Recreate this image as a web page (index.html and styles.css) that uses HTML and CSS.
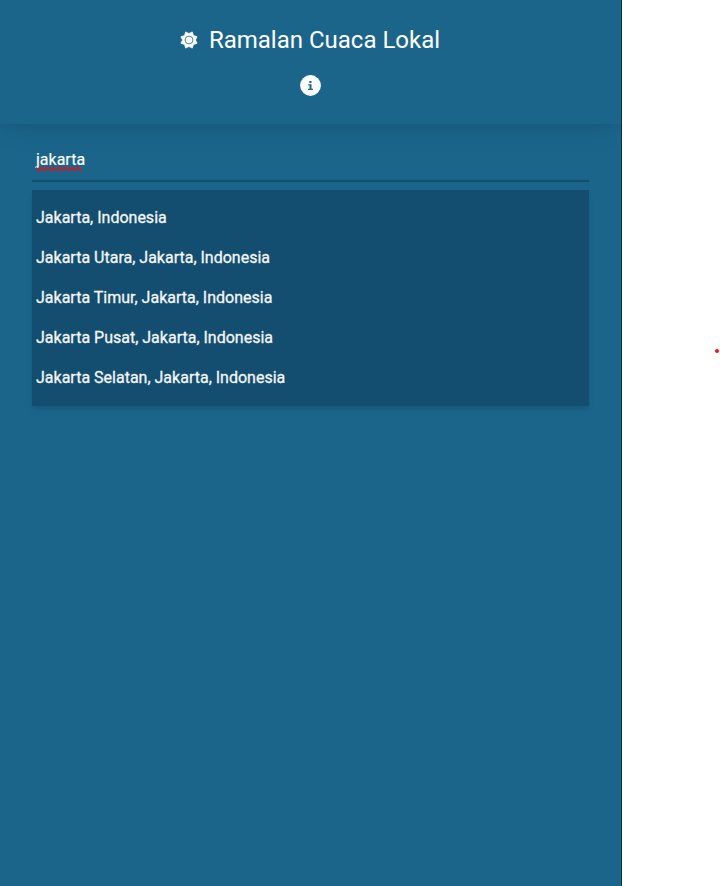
FILE: index.html
```html
<!DOCTYPE html>
<html lang="id">
<head>
<meta charset="utf-8">
<title>Ramalan Cuaca Lokal</title>
<link rel="stylesheet" href="styles.css">
</head>
<body>
<div class="app">
  <header class="header">
    <div class="brand">
      <svg class="sun" viewBox="0 0 18 18" aria-hidden="true">
        <path fill="currentColor" stroke="currentColor" stroke-width=".7" stroke-linejoin="round" d="M9 2.500 12.300.900l1.200 3.600 3.600 1.200L15.500 9l1.600 3.300-3.600 1.200-1.200 3.600L9 15.500l-3.300 1.600-1.200-3.600-3.600-1.200L2.500 9 .900 5.700l3.600-1.200L5.700.900Z"/>
        <circle cx="9" cy="9" r="3.900" fill="none" stroke="#1b658b" stroke-width=".8"/>
      </svg>
      <h1 class="title">Ramalan Cuaca Lokal</h1>
    </div>
    <svg class="info" viewBox="0 0 21 21" aria-hidden="true">
      <circle cx="10.500" cy="10.500" r="10.400" fill="currentColor"/>
      <path fill="#1b658b" d="M9.300 6h2.200v2H9.300zM8.200 9.200h3.300v4.500H13V15H8v-1.300h1.500v-3.200H8.200z"/>
    </svg>
  </header>
  <main class="main">
    <div class="search"><span class="query">jakarta<svg class="squiggle" viewBox="0 0 49 6" aria-hidden="true"><path fill="none" stroke="#dc141e" stroke-width="1.300" d="M0 1.500 3 5l3-4 3 4 3-4 3 4 3-4 3 4 3-4 3 4 3-4 3 4 3-4 3 4 3-4 3 4 1-1"/></svg></span></div>
    <ul class="results">
      <li>Jakarta, Indonesia</li>
      <li>Jakarta Utara, Jakarta, Indonesia</li>
      <li>Jakarta Timur, Jakarta, Indonesia</li>
      <li>Jakarta Pusat, Jakarta, Indonesia</li>
      <li>Jakarta Selatan, Jakarta, Indonesia</li>
    </ul>
  </main>
</div>
<span class="dot"></span>
</body>
</html>
```
FILE: styles.css
```css
* { box-sizing: border-box; }
body {
  margin: 0;
  height: 886px;
  display: flex;
  overflow: hidden;
  background: #fff;
  color: #fff;
  font: 16px/24px Roboto, sans-serif;
}
.app {
  width: 622px;
  height: 886px;
  overflow: hidden;
  background: #1b658b;
  border-right: 1px solid #0b3045;
}
.header {
  height: 124px;
  padding-top: 24px;
  display: flex;
  flex-direction: column;
  align-items: center;
  box-shadow: 0 15px 25px -8px rgba(0, 0, 0, .09), 0 5px 10px -5px rgba(0, 0, 0, .07);
}
.brand { display: flex; align-items: center; height: 32px; margin-right: 1px; }
.sun { width: 18px; height: 18px; margin-right: 11px; }
.title { margin: 0; font-size: 24px; line-height: 32px; font-weight: 400; white-space: nowrap; }
.info { width: 21px; height: 21px; margin-top: 19px; }
.main { padding: 24px 32px; }
.search { height: 34px; padding-left: 4px; border-bottom: 2px solid #134d6f; }
.query { position: relative; display: inline-block; -webkit-text-stroke: .15px currentColor; }
.squiggle { position: absolute; left: 0; top: 18px; width: 49px; height: 6px; }
.results {
  list-style: none;
  width: 557px;
  margin: 8px 0 0;
  padding: 8px 4px;
  background: #134d6f;
  box-shadow: 0 4px 6px -1px rgba(0, 0, 0, .1), 0 2px 4px -1px rgba(0, 0, 0, .06);
}
.results li { height: 40px; padding: 8px 0; color: #f4f6f8; -webkit-text-stroke: .3px currentColor; }
.dot { width: 4px; height: 4px; margin: 349px 0 0 93px; border-radius: 50%; background: #f01414; }
```
